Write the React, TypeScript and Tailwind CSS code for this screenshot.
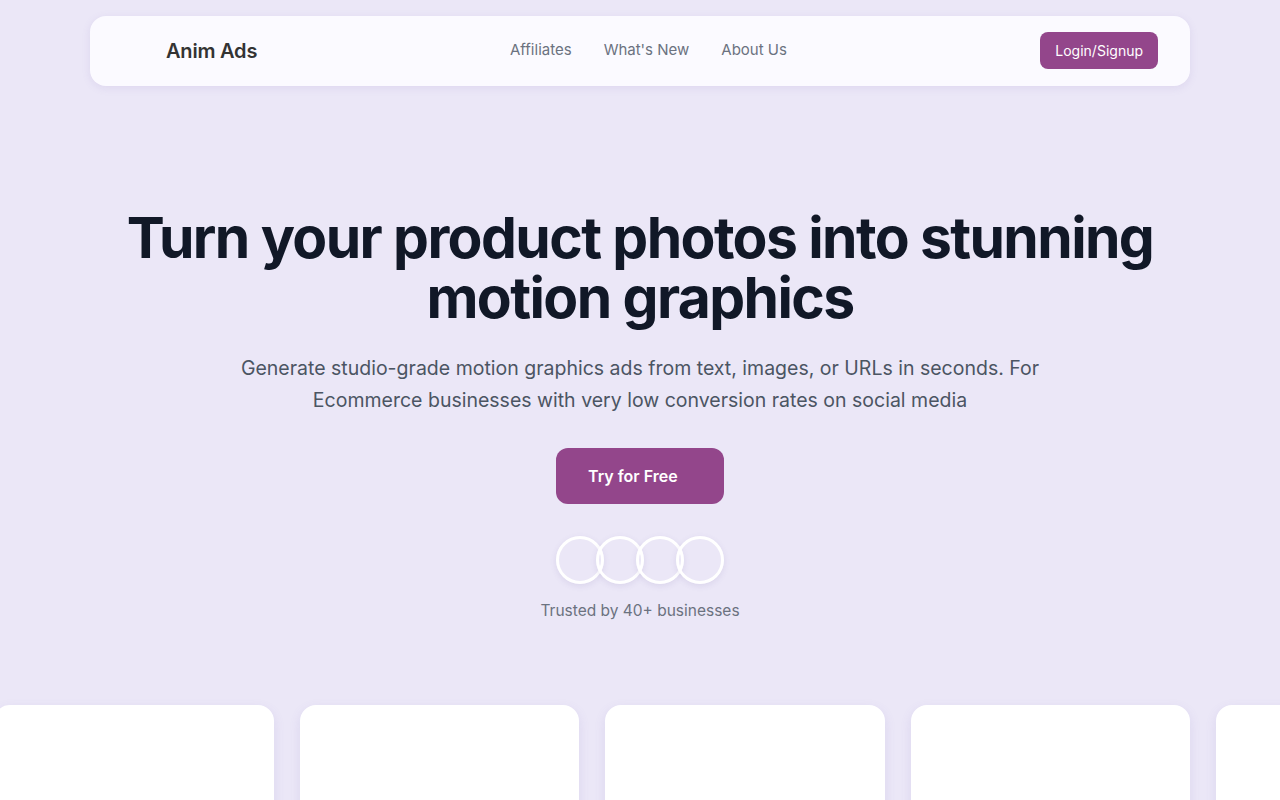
import React from 'react';

const NAV_LINKS = ['Affiliates', "What's New", 'About Us'];

const App = () => {
  return (
    <div className="min-h-screen w-full overflow-hidden bg-[#ebe7f7] font-['Inter',sans-serif]">
      {/* Header */}
      <div className="px-[90px] pt-4">
        <nav className="flex h-[70px] items-center rounded-2xl bg-[#fbfaff] pl-[76px] pr-8 shadow-[0_2px_8px_rgba(120,100,180,0.12)]">
          <span className="w-[344px] text-[20px] font-semibold tracking-[-0.2px] text-[#333333]">Anim Ads</span>
          <div className="-mt-0.5 flex items-center gap-8">
            {NAV_LINKS.map((link) => (
              <a key={link} className="text-[15px] text-[#6b7280]">{link}</a>
            ))}
          </div>
          <div className="flex flex-1 justify-end">
            <button className="-mt-0.5 h-[37px] rounded-lg bg-[#93468b] px-[15px] text-[14px] text-white">
              Login/Signup
            </button>
          </div>
        </nav>
      </div>

      {/* Hero */}
      <section className="flex flex-col items-center pt-[122px] text-center">
        <h1 className="text-[57px] font-bold leading-[60px] tracking-[-1.6px] text-[#111827]">
          Turn your product photos into stunning
          <br />
          motion graphics
        </h1>
        <p className="mt-6 max-w-[820px] text-[19.5px] leading-8 text-[#4b5563]">
          Generate studio-grade motion graphics ads from text, images, or URLs in seconds. For Ecommerce businesses with very low conversion rates on social media
        </p>
        <button className="mt-8 flex h-14 w-[168px] items-center rounded-xl bg-[#93468b] pl-8 text-[16px] font-semibold text-white">
          Try for Free
        </button>
        <div className="mt-8 flex">
          {[0, 1, 2, 3].map((i) => (
            <div
              key={i}
              className={`${i > 0 ? '-ml-2' : ''} h-12 w-12 rounded-full border-[3px] border-white shadow-[0_2px_6px_rgba(100,80,160,0.12)]`}
            />
          ))}
        </div>
        <p className="mt-[15px] text-[15.5px] text-[#6b7280]">Trusted by 40+ businesses</p>
      </section>

      {/* Cards strip */}
      <div className="mt-[83px] flex gap-[26px] -ml-[6px]">
        {[0, 1, 2, 3, 4].map((i) => (
          <div
            key={i}
            className="h-[200px] w-[279.5px] shrink-0 rounded-2xl bg-white shadow-[0_4px_12px_rgba(110,90,180,0.12)]"
          />
        ))}
      </div>
    </div>
  );
};

export default App;
